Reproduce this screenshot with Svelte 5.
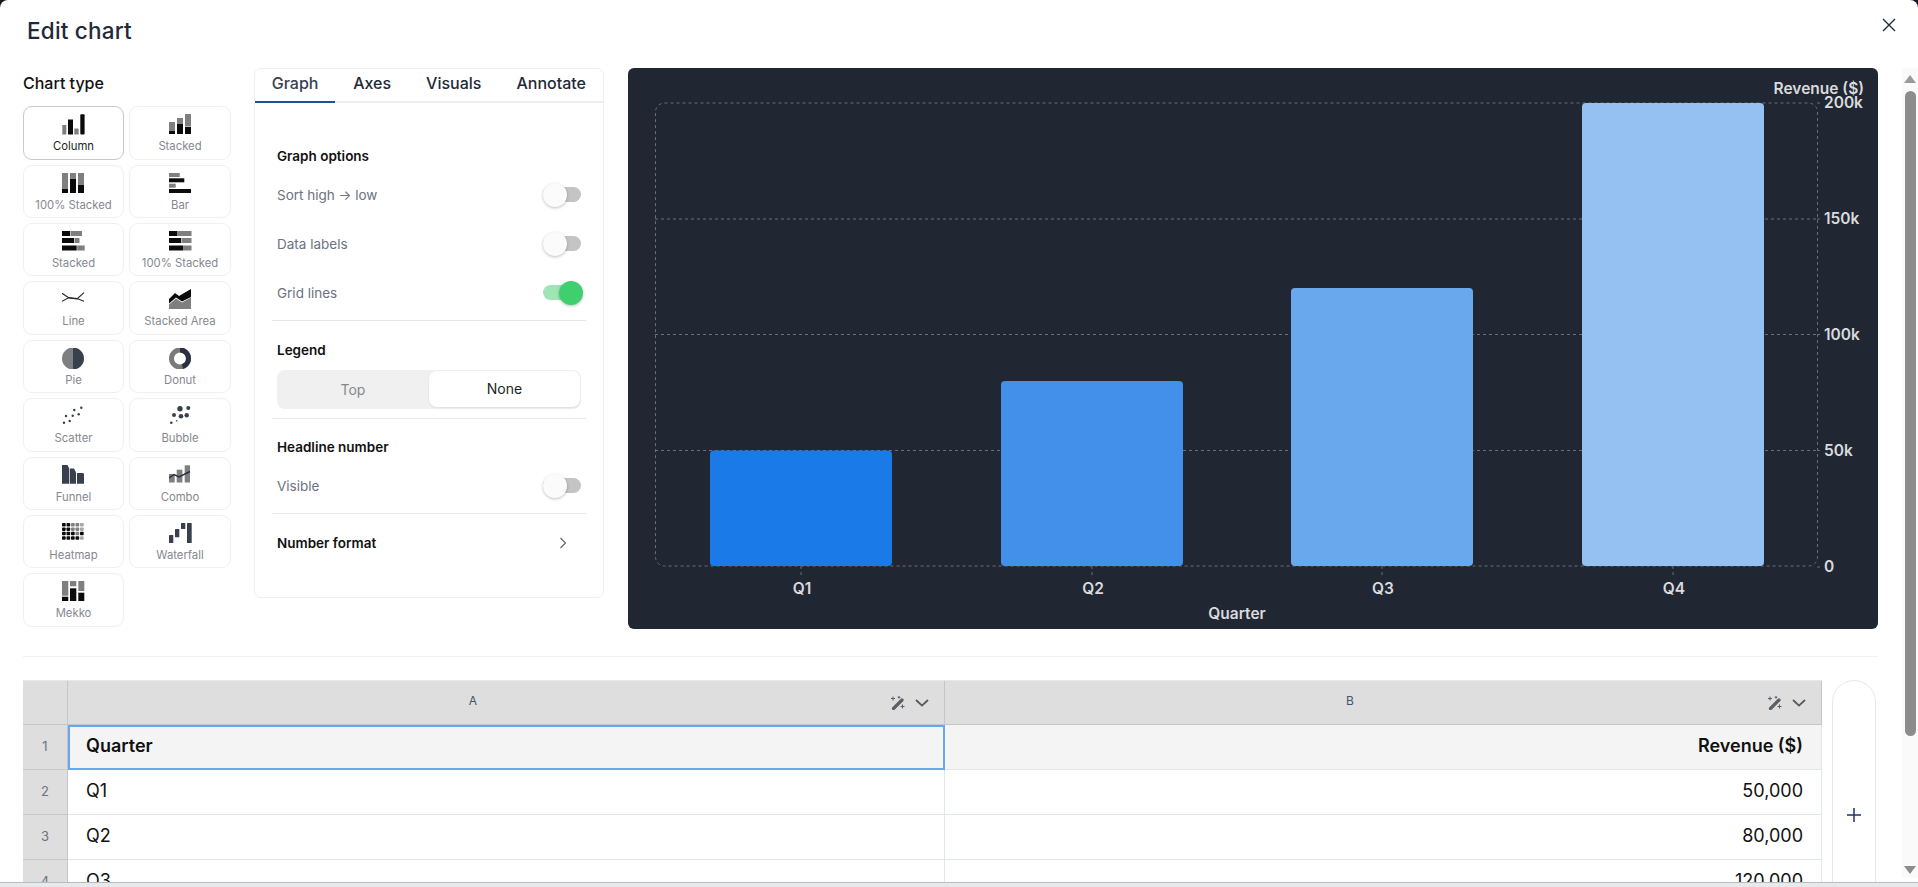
<script>
  const types = ['Column', 'Stacked', '100% Stacked', 'Bar', 'Stacked', '100% Stacked', 'Line', 'Stacked Area', 'Pie', 'Donut', 'Scatter', 'Bubble', 'Funnel', 'Combo', 'Heatmap', 'Waterfall', 'Mekko'];
  const tabs = ['Graph', 'Axes', 'Visuals', 'Annotate'];
  const rows = [['Q2', '80,000'], ['Q3', '120,000']];

  const bars = [
    { x: 82, y: 382.5, fill: '#1a7ae8', label: 'Q1' },
    { x: 373, y: 313, fill: '#4290ea', label: 'Q2' },
    { x: 663, y: 220, fill: '#69a8ed', label: 'Q3' },
    { x: 954, y: 35, fill: '#94c1f2', label: 'Q4' }
  ];
  const ticks = [[35, '200k'], [151, '150k'], [266.5, '100k'], [382.5, '50k'], [499, '0']];

  const scatter = [[2, 16.7], [7.7, 15], [4, 10], [10.7, 9.7], [16.7, 8.3], [12.3, 4], [19.3, 1.7]];
  const bubble = [[2.3, 16.7, 1.3], [7.7, 14.7, 0.8], [5, 9, 2], [12, 10.3, 2.3], [17.7, 9.3, 2.2], [11, 2.7, 2.7], [19.3, 2, 2]];
  const heat = ['kkggl', 'kkggl', 'kkkgk', 'kkkkl'];
</script>

{#snippet icon(type, i)}
  <svg class="ico" width="23" height="21" viewBox="0 0 23 21">
    {#if i === 0}
      <rect class="g" x="0.3" y="11" width="4" height="9.5" /><rect class="k" x="6" y="5.5" width="5" height="15" /><rect class="g" x="12.3" y="14.5" width="4.3" height="6" /><rect class="k" x="18.3" y="0.2" width="4.3" height="20.3" rx="1" />
    {:else if i === 1}
      <rect class="g" x="0" y="8" width="6" height="8" /><rect class="k" x="0" y="16.5" width="6" height="3.5" /><rect class="g" x="8" y="4" width="6" height="5" /><rect class="k" x="8" y="9.5" width="6" height="10.5" /><rect class="g" x="16" y="0" width="6" height="12.5" /><rect class="k" x="16" y="13" width="6" height="7" />
    {:else if i === 2}
      <rect class="g" x="0" y="0" width="6" height="15" /><rect class="k" x="0" y="15.5" width="6" height="4.5" /><rect class="g" x="8" y="0" width="6" height="5" /><rect class="k" x="8" y="5.5" width="6" height="14.5" /><rect class="g" x="16" y="0" width="6" height="11" /><rect class="k" x="16" y="11.5" width="6" height="8.5" />
    {:else if i === 3}
      <rect class="g" x="0" y="0" width="10.7" height="4" /><rect class="k" x="0" y="5.3" width="15.3" height="4" /><rect class="g" x="0" y="10.7" width="6.7" height="4" /><rect class="k" x="0" y="16" width="22" height="4" />
    {:else if i === 4}
      <rect class="k" x="0" y="0" width="8" height="5" /><rect class="g" x="8.5" y="0" width="11.5" height="5" /><rect class="k" x="0" y="7" width="12" height="5" /><rect class="g" x="12.5" y="7" width="5" height="5" /><rect class="k" x="0" y="14.5" width="14.7" height="5" /><rect class="g" x="15.2" y="14.5" width="7.5" height="5" />
    {:else if i === 5}
      <rect class="k" x="0" y="0" width="8.5" height="5" /><rect class="g" x="9" y="0" width="13.5" height="5" /><rect class="k" x="0" y="7" width="12" height="5" /><rect class="g" x="12.5" y="7" width="10" height="5" /><rect class="k" x="0" y="14.5" width="14.5" height="5" /><rect class="g" x="15" y="14.5" width="7.5" height="5" />
    {:else if i === 6}
      <g class="ln"><polyline points="0,4.3 7,9 15,10 22,3.7" /><polyline points="0,12.3 7,8.6 15,9.6 22,12.3" /></g>
    {:else if i === 7}
      <polygon class="g" points="0,15.5 7,9.5 13,13.5 22,8.5 22,20 0,20" /><polygon class="k" points="0,10 6,4 10,7 22,0 22,8 13,12.5 7,8.5 0,14.5" />
    {:else if i === 8}
      <path class="g" d="M11 -0.5a11 11 0 0 0 0 22z" /><path class="d" d="M11 -0.5a11 11 0 0 1 0 22z" />
    {:else if i === 9}
      <circle class="rg" cx="11" cy="10.5" r="8.5" /><path class="rd" d="M11 2a8.5 8.5 0 0 1 8.5 8.5a8.5 8.5 0 0 1 -6 8.1" />
    {:else if i === 10}
      {#each scatter as [cx, cy]}<circle class="d" {cx} {cy} r="1.2" />{/each}
    {:else if i === 11}
      {#each bubble as [cx, cy, r]}<circle class="d" {cx} {cy} {r} />{/each}
    {:else if i === 12}
      <polygon class="d" points="0,0 5.5,0 7,3 7,18.7 0,18.7" /><polygon class="d" points="7.7,3.5 12,3.5 14,7.5 14,18.7 7.7,18.7" /><polygon class="d" points="15,8 21,8 22,9 22,18.7 15,18.7" />
    {:else if i === 13}
      <rect class="g" x="0" y="9" width="5.7" height="8.5" /><rect class="g" x="7.7" y="4.7" width="5.7" height="12.8" /><rect class="g" x="15.7" y="0.3" width="5.3" height="17.2" /><polyline class="ln thick" points="0,13 5,9.5 10,12 21,6.5" />
    {:else if i === 14}
      {#each heat as line, r}
        {#each line.split('') as c, col}<rect class={c} x={col * 4.5} y={r * 4.4} width="3.7" height="3.5" rx="0.8" />{/each}
      {/each}
    {:else if i === 15}
      <rect class="d" x="0" y="12" width="4.3" height="8" rx="0.5" /><rect class="d" x="6" y="6" width="4.3" height="8.3" rx="0.5" /><rect class="d" x="12" y="0" width="4.3" height="6" rx="0.5" /><rect class="d" x="18" y="0" width="4.7" height="20" rx="0.5" />
    {:else}
      <rect class="g" x="0" y="0" width="6.3" height="14.7" /><rect class="k" x="0" y="15.7" width="6.3" height="4.3" /><rect class="g" x="8" y="0" width="6.3" height="5.3" /><rect class="k" x="8" y="7.3" width="6.3" height="12.7" /><rect class="g" x="16.3" y="0" width="6" height="10" /><rect class="k" x="16.3" y="11.7" width="6" height="8.3" />
    {/if}
  </svg>
{/snippet}

{#snippet toggle(on)}
  <span class="toggle" class:on><span class="knob"></span></span>
{/snippet}

{#snippet colTools()}
  <span class="tools">
    <svg width="15" height="14" viewBox="0 0 15 14">
      <path d="M3.5 12.5 12 4" stroke="#5b5f66" stroke-width="3.2" stroke-linecap="round" fill="none" />
      <path d="M3 0.5v4M1 2.5h4M9 0v2.6M7.7 1.3h2.6M12.5 8.5v4M10.5 10.5h4" stroke="#5b5f66" stroke-width="1" fill="none" />
    </svg>
    <svg width="14" height="8" viewBox="0 0 14 8"><path d="M1 1l6 5.6L13 1" stroke="#55595f" stroke-width="1.8" fill="none" /></svg>
  </span>
{/snippet}

<div class="page">
  <div class="dialog">
    <header>
      <h1>Edit chart</h1>
      <svg class="close" width="14" height="14" viewBox="0 0 14 14"><path d="M1 1l12 12M13 1 1 13" stroke="#1f2937" stroke-width="1.4" fill="none" /></svg>
    </header>

    <div class="main">
      <div class="scroll">
        <div class="top">
          <section class="types">
            <h2>Chart type</h2>
            <div class="type-grid">
              {#each types as type, i}
                <div class="type" class:active={i === 0}>
                  {@render icon(type, i)}
                  <span>{type}</span>
                </div>
              {/each}
            </div>
          </section>

          <section class="panel">
            <div class="tabs">
              {#each tabs as tab, i}
                <div class="tab" class:sel={i === 0}>{tab}</div>
              {/each}
            </div>
            <div class="opts">
              <h3 class="first">Graph options</h3>
              <div class="opt"><span>Sort high → low</span>{@render toggle(false)}</div>
              <div class="opt"><span>Data labels</span>{@render toggle(false)}</div>
              <div class="opt"><span>Grid lines</span>{@render toggle(true)}</div>
              <hr />
              <h3>Legend</h3>
              <div class="seg"><div>Top</div><div class="cur">None</div></div>
              <hr class="tight" />
              <h3>Headline number</h3>
              <div class="opt low"><span>Visible</span>{@render toggle(false)}</div>
              <hr class="tight last" />
              <div class="fmt">
                <h3>Number format</h3>
                <svg width="8" height="12" viewBox="0 0 8 12"><path d="M1.5 1l5 5-5 5" stroke="#5b6168" stroke-width="1.1" fill="none" /></svg>
              </div>
            </div>
          </section>

          <section class="chart">
            <svg width="1250" height="561" viewBox="0 0 1250 561">
              <g class="grid">
                <rect x="27.5" y="35" width="1162" height="463" rx="9" />
                {#each ticks.slice(1, 4) as t}<line x1="27" x2="1189" y1={t[0]} y2={t[0]} />{/each}
                {#each ticks as t}<line x1="1189" x2="1195" y1={t[0]} y2={t[0]} />{/each}
                {#each bars as b}<line x1={b.x + 91} x2={b.x + 91} y1="498" y2="507" />{/each}
              </g>
              {#each bars as b}
                <rect x={b.x} y={b.y} width="182" height={498 - b.y} rx="4" fill={b.fill} />
                <text x={b.x + 92} y="520" text-anchor="middle" dominant-baseline="central">{b.label}</text>
              {/each}
              {#each ticks as t}
                <text x="1196" y={t[0] - 0.5} dominant-baseline="central">{t[1]}</text>
              {/each}
              <text x="1236" y="20" text-anchor="end" dominant-baseline="central">Revenue ($)</text>
              <text x="609" y="545" text-anchor="middle" dominant-baseline="central">Quarter</text>
            </svg>
          </section>
        </div>

        <hr class="split" />

        <div class="bottom">
          <div class="sheet">
            <div class="corner"></div>
            <div class="colhead"><span>A</span>{@render colTools()}</div>
            <div class="colhead"><span>B</span>{@render colTools()}</div>

            <div class="rownum">1</div>
            <div class="cell head picked">Quarter</div>
            <div class="cell head num">Revenue ($)</div>

            <div class="rownum">2</div>
            <div class="cell">Q1</div>
            <div class="cell num">50,000</div>

            {#each rows as [q, rev], i}
              <div class="rownum">{i + 3}</div>
              <div class="cell">{q}</div>
              <div class="cell num">{rev}</div>
            {/each}
          </div>
          <div class="addcol">
            <svg width="16" height="16" viewBox="0 0 16 16"><path d="M8 1v14M1 8h14" stroke="#1f3560" stroke-width="1.5" fill="none" /></svg>
          </div>
        </div>
      </div>

      <div class="scrollbar">
        <span class="arrow up"></span>
        <span class="thumb"></span>
        <span class="arrow down"></span>
      </div>
    </div>
  </div>
  <div class="strip"></div>
</div>

<style>
  :global(body) {
    margin: 0;
    font-family: Inter, "Liberation Sans", sans-serif;
    color: #111827;
  }

  .page {
    height: 887px;
    width: 1918px;
    overflow: hidden;
    display: flex;
    flex-direction: column;
    background: #14181f;
  }
  .dialog {
    flex: 1;
    min-height: 0;
    background: #fff;
    border-radius: 8px 8px 0 0;
    display: flex;
    flex-direction: column;
    overflow: hidden;
  }
  .strip {
    height: 4px;
    background: #e6eaec;
    border-top: 1px solid #b9bdc0;
  }

  header {
    height: 68px;
    flex: none;
    display: flex;
    justify-content: space-between;
    align-items: flex-start;
    padding: 0 22px 0 27px;
  }
  h1 {
    margin: 17px 0 0;
    font-size: 22.5px;
    letter-spacing: 0.2px;
    line-height: 27px;
    font-weight: 500;
    color: #1f2937;
  }
  .close { margin-top: 18px; }

  .main {
    flex: 1;
    min-height: 0;
    display: flex;
  }
  .scroll {
    flex: 1;
    min-width: 0;
    overflow: hidden;
    padding: 0 24px 0 23px;
  }

  .scrollbar {
    width: 16px;
    flex: none;
    background: #fafafa;
    position: relative;
    display: flex;
    flex-direction: column;
    align-items: center;
    padding-top: 7px;
    margin-bottom: 4px;
  }
  .thumb {
    width: 11px;
    height: 645px;
    margin-top: 8px;
    border-radius: 5.5px;
    background: #8c8c8c;
  }
  .arrow {
    width: 0;
    height: 0;
    border-left: 6px solid transparent;
    border-right: 6px solid transparent;
  }
  .arrow.up { border-bottom: 8px solid #9a9a9a; }
  .arrow.down {
    margin-top: auto;
    margin-bottom: 4px;
    border-top: 8px solid #8c8c8c;
  }

  .top {
    display: flex;
    height: 561px;
  }

  .types {
    width: 208px;
    flex: none;
    margin-right: 23px;
  }
  h2 {
    margin: 0 0 8.3px;
    font-size: 16px;
    line-height: 30px;
    font-weight: 500;
    color: #111;
  }
  .type-grid {
    display: grid;
    grid-template-columns: 101px 102px;
    column-gap: 5px;
    grid-auto-rows: 53.4px;
    row-gap: 5px;
  }
  .type {
    box-sizing: border-box;
    border: 1px solid #eef0f1;
    border-radius: 9px;
    display: flex;
    flex-direction: column;
    align-items: center;
    padding-top: 7px;
    font-size: 11.3px;
    line-height: 15px;
    color: #85898f;
  }
  .type span { margin-top: 4px; }
  .type.active {
    border-color: #c9c9c9;
    color: #1c1f24;
  }
  .ico { display: block; }
  .g { fill: #7f7f7f; }
  .k { fill: #0b0b0b; }
  .d { fill: #383f4d; }
  .l { fill: #a6a6a6; }
  .ln { stroke: #22252b; stroke-width: 1.1; fill: none; }
  .ln.thick { stroke-width: 1.5; stroke: #2a3040; }
  .rg { fill: none; stroke: #7a7a7a; stroke-width: 5; }
  .rd { fill: none; stroke: #2a3040; stroke-width: 5; }

  .panel {
    width: 350px;
    height: 530px;
    box-sizing: border-box;
    flex: none;
    margin-right: 24px;
    border: 1px solid #eceef0;
    border-radius: 7px;
  }
  .tabs {
    display: flex;
    height: 32px;
    border-bottom: 2px solid #eceef0;
  }
  .tab {
    padding: 0 17px 0 18px;
    font-size: 16px;
    line-height: 28px;
    height: 34px;
    box-sizing: border-box;
    color: #1f2937;
    font-weight: 500;
  }
  .tab.sel {
    width: 83px;
    padding: 0;
    text-align: center;
    border-bottom: 2px solid #1f4f9e;
    color: #374151;
  }
  .opts { padding: 0 17px 0 17px; }
  h3 {
    margin: 0;
    font-size: 13.5px;
    line-height: 18px;
    font-weight: 600;
    color: #111;
    padding-left: 5px;
  }
  h3.first { margin-top: 44px; }
  .opt {
    height: 49px;
    display: flex;
    align-items: center;
    justify-content: space-between;
    padding: 0 5px;
    font-size: 13.5px;
    color: #6b7280;
  }
  .opts > h3.first + .opt { margin-top: 5px; }
  .opt.low { margin-top: 5px; }
  hr {
    border: 0;
    border-top: 1px solid #e4e8ea;
    margin: 3px 0 20px;
  }
  hr.tight { margin: 9px 0 19px; }
  hr.tight.last { margin: 3px 0 20px; }
  .toggle {
    display: block;
    position: relative;
    width: 38px;
    height: 15px;
    border-radius: 8px;
    background: #c4c4c4;
  }
  .knob {
    position: absolute;
    left: 0;
    top: -4.5px;
    width: 24px;
    height: 24px;
    border-radius: 50%;
    background: #fbfbfb;
    box-shadow: 0 1px 3px rgba(0, 0, 0, 0.25);
  }
  .toggle.on { background: #9fe6b6; }
  .on .knob {
    left: 16px;
    background: #40cf6f;
  }
  .seg {
    margin: 11px 5px 0;
    height: 39px;
    border-radius: 8px;
    background: #f0f0f0;
    display: grid;
    grid-template-columns: 152px 152px;
    font-size: 14px;
    color: #85898f;
    text-align: center;
    line-height: 39px;
  }
  .seg .cur {
    background: #fff;
    color: #1c1f24;
    margin: 1px 1px 2px 0;
    line-height: 36px;
    border-radius: 8px;
    box-shadow: 0 1px 2px rgba(0, 0, 0, 0.08);
  }
  .fmt {
    display: flex;
    justify-content: space-between;
    align-items: center;
    padding: 0 19px 0 0;
    margin-top: 1px;
  }

  .chart {
    flex: 1;
    min-width: 0;
    background: #202632;
    border-radius: 6px;
    overflow: hidden;
  }
  .chart svg { display: block; }
  .chart text {
    fill: #d9dbde;
    font-size: 15.5px;
    font-weight: 600;
    font-family: Inter, sans-serif;
  }
  .grid rect, .grid line {
    fill: none;
    stroke: #6a6e76;
    stroke-width: 1;
    stroke-dasharray: 3 3;
  }

  hr.split {
    margin: 27px 0 23px;
    border-top: 1px solid #f0f1f2;
  }

  .bottom {
    display: flex;
    align-items: flex-start;
    gap: 10px;
  }
  .sheet {
    width: 1799px;
    flex: none;
    display: grid;
    grid-template-columns: 45px 877px 877px;
    grid-template-rows: 44px;
    grid-auto-rows: 45px;
    border-top: 1px solid #e4e8ea;
    font-size: 18px;
    color: #111;
  }
  .corner, .colhead, .rownum {
    background: #dedede;
    box-sizing: border-box;
    border-right: 1px solid #c6c6c6;
    border-bottom: 1px solid #c6c6c6;
  }
  .colhead {
    position: relative;
    display: flex;
    align-items: center;
    justify-content: center;
    padding: 0 66px 4px 0;
    font-size: 12px;
    color: #44546a;
  }
  .tools {
    position: absolute;
    right: 15px;
    top: 15px;
    display: flex;
    align-items: center;
    gap: 10px;
  }
  .rownum {
    display: flex;
    align-items: center;
    justify-content: center;
    padding-bottom: 3px;
    font-size: 13px;
    color: #6b7280;
    border-bottom-color: #c9c9c9;
  }
  .cell {
    box-sizing: border-box;
    display: flex;
    align-items: center;
    padding: 0 18px 4px;
    border-right: 1px solid #e1e6e9;
    border-bottom: 1px solid #e1e6e9;
  }
  .cell.head {
    background: #f4f4f4;
    font-weight: 600;
  }
  .cell.num { justify-content: flex-end; }
  .cell.picked {
    outline: 2px solid #6aa5ef;
    outline-offset: -2px;
  }

  .addcol {
    width: 44px;
    height: 270px;
    box-sizing: border-box;
    flex: none;
    border: 1px solid #e4e8eb;
    border-radius: 22px;
    display: flex;
    align-items: center;
    justify-content: center;
  }
</style>
